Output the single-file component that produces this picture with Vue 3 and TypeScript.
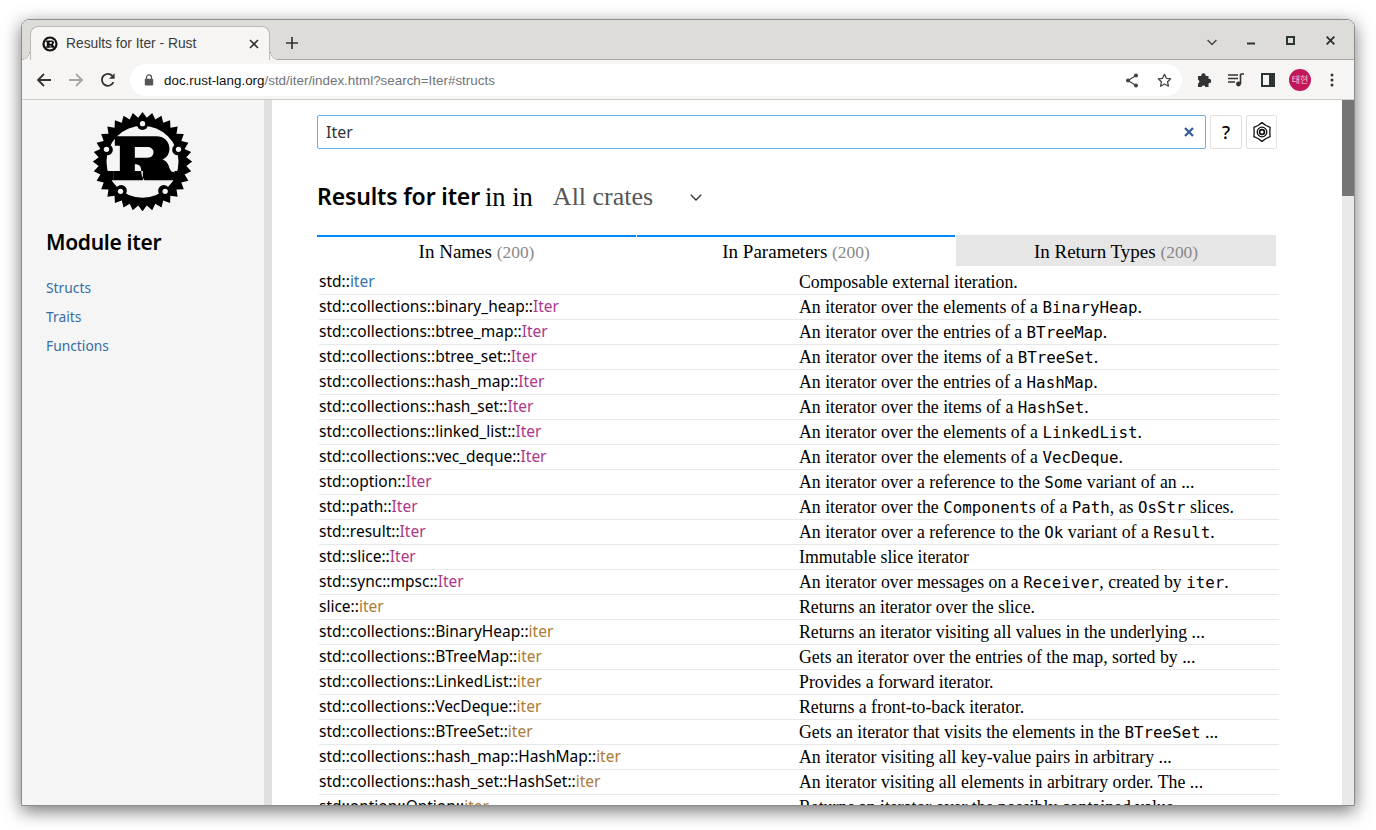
<template>
  <div class="desktop">
    <div class="window">
      <header class="tabstrip">
        <div class="tab">
          <svg class="favicon" width="16" height="16" viewBox="0 0 16 16">
            <circle cx="8" cy="8" r="7.6" fill="#111" />
            <circle cx="8" cy="8" r="5.4" fill="#f6f5f3" />
            <path d="M3.6 4.6h6.2c2.6 0 2.9 3.2 1 3.8 1 .3 1 2.4 2.2 2.2v1.1H9.6c-.8-.6-.4-2.5-2-2.5v1.2h1.2v1.3H3.6v-1.3h1.2V5.9H3.6zM7.6 6.1v1.7h1.7c1 0 1-1.7 0-1.7z" fill="#111" fill-rule="evenodd" />
          </svg>
          <span class="tab-title">Results for Iter - Rust</span>
          <svg class="tab-close" width="10" height="10" viewBox="0 0 10 10"><path d="M1 1l8 8M9 1l-8 8" stroke="#333" stroke-width="1.6" /></svg>
        </div>
        <svg class="new-tab" width="14" height="14" viewBox="0 0 14 14"><path d="M7 1v12M1 7h12" stroke="#333" stroke-width="1.7" /></svg>
        <div class="window-controls">
          <svg class="ctl-drop" width="10" height="7" viewBox="0 0 10 7"><path d="M.6 1l4.4 4.4L9.4 1" fill="none" stroke="#444" stroke-width="1.4" /></svg>
          <svg class="ctl-min" width="8" height="3" viewBox="0 0 8 3"><path d="M0 1.5h8" stroke="#2d3436" stroke-width="2" /></svg>
          <svg class="ctl-max" width="9" height="9" viewBox="0 0 9 9"><rect x="1" y="1" width="7" height="7" fill="none" stroke="#2d3436" stroke-width="2" /></svg>
          <svg class="ctl-close" width="9" height="9" viewBox="0 0 9 9"><path d="M.6.6l7.8 7.8M8.4.6L.6 8.4" stroke="#2d3436" stroke-width="1.9" /></svg>
        </div>
      </header>

      <div class="toolbar">
        <span class="slot"><svg width="16" height="16" viewBox="0 0 16 16"><path d="M15 8H2M8 2L2 8l6 6" fill="none" stroke="#333" stroke-width="1.8" /></svg></span>
        <span class="slot"><svg width="16" height="16" viewBox="0 0 16 16"><path d="M1 8h13M8 2l6 6-6 6" fill="none" stroke="#a5a5a5" stroke-width="1.8" /></svg></span>
        <span class="slot"><svg width="16" height="16" viewBox="0 0 16 16"><path d="M13.4 10.2A6 6 0 1 1 12.4 3.8" fill="none" stroke="#333" stroke-width="1.8" /><path d="M14.6 1.2v5.6H9z" fill="#333" /></svg></span>
        <div class="omnibox">
          <svg width="10" height="12" viewBox="0 0 10 12"><path d="M2.5 5V3.4a2.5 2.5 0 0 1 5 0V5" fill="none" stroke="#555" stroke-width="1.3" /><rect x=".8" y="4.8" width="8.4" height="6.8" rx="1" fill="#555" /></svg>
          <span class="url"><span class="url-host">doc.rust-lang.org</span>/std/iter/index.html?search=Iter#structs</span>
          <svg class="omni-share" width="14" height="15" viewBox="0 0 14 15"><path d="M11 2.5L3 7.5l8 5" fill="none" stroke="#444" stroke-width="1.2" /><circle cx="11" cy="2.5" r="2" fill="#444" /><circle cx="3" cy="7.5" r="2" fill="#444" /><circle cx="11" cy="12.5" r="2" fill="#444" /></svg>
          <svg class="omni-star" width="15" height="15" viewBox="0 0 15 15"><path d="M7.5 1.3l1.9 4 4.4.5-3.2 3 .8 4.4-3.9-2.2-3.9 2.2.8-4.4-3.2-3 4.4-.5z" fill="none" stroke="#444" stroke-width="1.3" stroke-linejoin="round" /></svg>
        </div>
        <div class="toolbar-right">
          <span class="slot"><svg width="15" height="15" viewBox="0 0 15 15"><path d="M4.3 3v-.5a2.2 2.2 0 0 1 4.4 0V3h2.8v2.8h.5a2.2 2.2 0 0 1 0 4.4h-.5V14H8.4a2 2 0 0 0-3.8 0H1v-3.5a2 2 0 0 0 0-3.8V3z" fill="#333" /></svg></span>
          <span class="slot"><svg width="16" height="14" viewBox="0 0 16 14"><path d="M0 2h10M0 5.5h10M0 9h7" stroke="#333" stroke-width="1.4" /><path d="M12.5 1v10" stroke="#333" stroke-width="1.6" /><path d="M12.5 1H16" stroke="#333" stroke-width="1.6" /><circle cx="10.5" cy="11" r="2.4" fill="#333" /></svg></span>
          <span class="slot"><svg width="14" height="14" viewBox="0 0 14 14"><rect x="1" y="1" width="12" height="12" fill="none" stroke="#2d3436" stroke-width="2" /><rect x="8" y="1" width="5" height="12" fill="#2d3436" /></svg></span>
          <span class="slot"><span class="avatar">태현</span></span>
          <span class="slot"><svg width="4" height="14" viewBox="0 0 4 14"><circle cx="2" cy="2" r="1.5" fill="#333" /><circle cx="2" cy="7" r="1.5" fill="#333" /><circle cx="2" cy="12" r="1.5" fill="#333" /></svg></span>
        </div>
      </div>

      <div class="page">
        <aside class="sidebar">
          <svg class="logo" width="99" height="99" viewBox="100 35 296 297">
            <path :d="gearPath" fill="#000" fill-rule="evenodd" />
            <!-- bumps that carry the five holes -->
            <circle cx="248" cy="72" r="17" fill="#000" />
            <circle cx="142" cy="148" r="17" fill="#000" />
            <circle cx="354" cy="148" r="17" fill="#000" />
            <circle cx="184" cy="271" r="17" fill="#000" />
            <circle cx="312" cy="271" r="17" fill="#000" />
            <path d="M165 108h125c44 0 52 56 18 70 14 4 18 14 22 28 3 8 8 10 14 8l4 26h-94c-6-6-10-16-10-30 0-14-8-18-19-18v20h24v28h-89v-28h20v-76h-15zM225 140v32h38c24 0 24-32 0-32z" fill="#000" fill-rule="evenodd" />
            <path d="M138 212h22v28h-10zM358 212h-14v28h4z" fill="#000" />
            <circle cx="248" cy="70" r="8" fill="#f5f5f5" />
            <circle cx="140" cy="147" r="8" fill="#f5f5f5" />
            <circle cx="356" cy="147" r="8" fill="#f5f5f5" />
            <circle cx="182" cy="273" r="8" fill="#f5f5f5" />
            <circle cx="316" cy="273" r="8" fill="#f5f5f5" />
          </svg>
          <h2 class="side-title">Module iter</h2>
          <nav class="side-links">
            <a v-for="link in sideLinks" :key="link">{{ link }}</a>
          </nav>
        </aside>
        <div class="resizer"></div>

        <main class="main">
          <div class="search-row">
            <div class="search-input">
              <span>Iter</span>
              <svg width="10" height="10" viewBox="0 0 10 10"><path d="M1 1l8 8M9 1l-8 8" stroke="#3a5d9c" stroke-width="2.4" /></svg>
            </div>
            <div class="icon-btn help">?</div>
            <div class="icon-btn gear">
              <svg width="22" height="22" viewBox="0 0 22 22" fill="none" stroke="#111">
                <path d="M11 1.6l4 2.9 4.1 1.8-.3 4.7.3 4.7-4.1 1.8-4 2.9-4-2.9-4.1-1.8.3-4.7-.3-4.7 4.1-1.8z" stroke-width="1.3" stroke-linejoin="round" />
                <circle cx="11" cy="11" r="4.8" stroke-width="1.3" />
                <circle cx="11" cy="11" r="2.4" stroke-width="1.7" />
              </svg>
            </div>
          </div>

          <div class="results-head">
            <h1>Results for iter</h1>
            <span class="in-in">in in</span>
            <span class="crate-select">All crates</span>
            <svg width="12" height="7" viewBox="0 0 12 7"><path d="M.8.8L6 6l5.2-5.2" fill="none" stroke="#333" stroke-width="1.3" /></svg>
          </div>

          <div class="tabs">
            <div v-for="t in tabs" :key="t" class="res-tab" :class="{ 'res-tab--off': t === 'In Return Types' }">
              {{ t }} <span class="count">(200)</span>
            </div>
          </div>

          <div class="rows">
            <div v-for="row in rows" :key="row.path + row.name" class="row">
              <div class="row-name">{{ row.path }}<span :class="`k-${row.kind}`">{{ row.name }}</span></div>
              <div class="row-desc">
                <template v-for="(part, i) in row.desc.split('`')" :key="i">
                  <code v-if="i % 2">{{ part }}</code>
                  <template v-else>{{ part }}</template>
                </template>
              </div>
            </div>
          </div>
        </main>

        <div class="scrollbar"><div class="thumb"></div></div>
      </div>
    </div>
  </div>
</template>

<script setup lang="ts">
interface ResultRow {
  path: string;
  name: string;
  kind: "mod" | "struct" | "method";
  desc: string;
}

const sideLinks = ["Structs", "Traits", "Functions"];
const tabs = ["In Names", "In Parameters", "In Return Types"];

const rows: ResultRow[] = [
  { path: "std::", name: "iter", kind: "mod", desc: "Composable external iteration." },
  { path: "std::collections::binary_heap::", name: "Iter", kind: "struct", desc: "An iterator over the elements of a `BinaryHeap`." },
  { path: "std::collections::btree_map::", name: "Iter", kind: "struct", desc: "An iterator over the entries of a `BTreeMap`." },
  { path: "std::collections::btree_set::", name: "Iter", kind: "struct", desc: "An iterator over the items of a `BTreeSet`." },
  { path: "std::collections::hash_map::", name: "Iter", kind: "struct", desc: "An iterator over the entries of a `HashMap`." },
  { path: "std::collections::hash_set::", name: "Iter", kind: "struct", desc: "An iterator over the items of a `HashSet`." },
  { path: "std::collections::linked_list::", name: "Iter", kind: "struct", desc: "An iterator over the elements of a `LinkedList`." },
  { path: "std::collections::vec_deque::", name: "Iter", kind: "struct", desc: "An iterator over the elements of a `VecDeque`." },
  { path: "std::option::", name: "Iter", kind: "struct", desc: "An iterator over a reference to the `Some` variant of an ..." },
  { path: "std::path::", name: "Iter", kind: "struct", desc: "An iterator over the `Component`s of a `Path`, as `OsStr` slices." },
  { path: "std::result::", name: "Iter", kind: "struct", desc: "An iterator over a reference to the `Ok` variant of a `Result`." },
  { path: "std::slice::", name: "Iter", kind: "struct", desc: "Immutable slice iterator" },
  { path: "std::sync::mpsc::", name: "Iter", kind: "struct", desc: "An iterator over messages on a `Receiver`, created by `iter`." },
  { path: "slice::", name: "iter", kind: "method", desc: "Returns an iterator over the slice." },
  { path: "std::collections::BinaryHeap::", name: "iter", kind: "method", desc: "Returns an iterator visiting all values in the underlying ..." },
  { path: "std::collections::BTreeMap::", name: "iter", kind: "method", desc: "Gets an iterator over the entries of the map, sorted by ..." },
  { path: "std::collections::LinkedList::", name: "iter", kind: "method", desc: "Provides a forward iterator." },
  { path: "std::collections::VecDeque::", name: "iter", kind: "method", desc: "Returns a front-to-back iterator." },
  { path: "std::collections::BTreeSet::", name: "iter", kind: "method", desc: "Gets an iterator that visits the elements in the `BTreeSet` ..." },
  { path: "std::collections::hash_map::HashMap::", name: "iter", kind: "method", desc: "An iterator visiting all key-value pairs in arbitrary ..." },
  { path: "std::collections::hash_set::HashSet::", name: "iter", kind: "method", desc: "An iterator visiting all elements in arbitrary order. The ..." },
  { path: "std::option::Option::", name: "iter", kind: "method", desc: "Returns an iterator over the possibly contained value." },
];

// toothed outer edge of the logo, with the inner opening cut out
function buildGear(cx: number, cy: number, outer: number, root: number, hole: number, teeth: number): string {
  const pts: string[] = [];
  for (let i = 0; i < teeth * 2; i++) {
    const r = i % 2 ? root : outer;
    const a = (i * Math.PI) / teeth - Math.PI / 2;
    pts.push(`${(cx + r * Math.cos(a)).toFixed(1)} ${(cy + r * Math.sin(a)).toFixed(1)}`);
  }
  const ring = `M${cx - hole} ${cy}a${hole} ${hole} 0 1 0 ${hole * 2} 0a${hole} ${hole} 0 1 0 ${-hole * 2} 0z`;
  return `M${pts.join("L")}z${ring}`;
}

const gearPath = buildGear(248, 184, 149, 132, 108, 32);
</script>

<style>
html {
  background: #fff;
  overflow: hidden;
}
</style>

<style scoped>
.desktop {
  box-sizing: border-box;
  width: 1376px;
  height: 830px;
  padding: 19px 0 0 21px;
  overflow: hidden;
}
.window {
  box-sizing: border-box;
  width: 1334px;
  height: 787px;
  border: 1px solid #8c8c8c;
  border-radius: 8px 8px 0 0;
  display: flex;
  flex-direction: column;
  overflow: hidden;
  box-shadow: 0 5px 18px rgba(0, 0, 0, 0.55);
  font-family: "Liberation Sans", sans-serif;
}
.tabstrip {
  height: 40px;
  flex: none;
  background: #dedcd9;
  box-shadow: inset 0 -1px 0 #a9a7a3;
  display: flex;
  align-items: flex-end;
  padding-left: 8px;
  box-sizing: border-box;
}
.tab {
  position: relative;
  width: 240px;
  height: 34px;
  background: #f6f5f3;
  border: 1px solid #bdbab5;
  border-bottom: 0;
  border-radius: 8px 8px 0 0;
  box-sizing: border-box;
  display: flex;
  align-items: center;
  padding: 0 10px 0 11px;
  gap: 8px;
}
.tab::before,
.tab::after {
  content: "";
  position: absolute;
  bottom: 0;
  width: 8px;
  height: 8px;
}
.tab::before {
  left: -9px;
  background: radial-gradient(circle at 0 0, transparent 7px, #a9a7a3 7.5px, #f6f5f3 8px);
}
.tab::after {
  right: -9px;
  background: radial-gradient(circle at 100% 0, transparent 7px, #a9a7a3 7.5px, #f6f5f3 8px);
}
.tab-title {
  font-size: 13.8px;
  color: #3c3c3c;
  flex: 1;
}
.new-tab {
  margin: 0 0 10px 15px;
}
.window-controls {
  margin: 0 0 0 auto;
  height: 40px;
  display: flex;
  align-items: center;
  padding-right: 19px;
}
.ctl-drop { margin-top: 5px; }
.ctl-min { margin: 6px 0 0 30px; }
.ctl-max { margin-left: 31px; }
.ctl-close { margin-left: 31px; }
.toolbar {
  height: 40px;
  flex: none;
  box-sizing: border-box;
  background: #f6f5f3;
  border-bottom: 1px solid #cfccc6;
  display: flex;
  align-items: center;
  padding: 1px 0 0 6px;
}
.slot {
  width: 32px;
  height: 32px;
  flex: none;
  display: flex;
  align-items: center;
  justify-content: center;
}
.omnibox {
  width: 1052px;
  height: 32px;
  background: #fff;
  border-radius: 16px;
  margin-left: 6px;
  display: flex;
  align-items: center;
  padding: 0 10px 0 14px;
  box-sizing: border-box;
}
.url {
  margin-left: 10px;
  font-size: 13.4px;
  color: #6f7478;
  flex: 1;
}
.url-host { color: #111; }
.omni-share { margin-right: 18px; }
.toolbar-right {
  display: flex;
  align-items: center;
  margin-left: 6px;
}
.avatar {
  width: 22px;
  height: 22px;
  border-radius: 50%;
  background: #c2185b;
  color: #f7c3d6;
  font: 9px/22px "Noto Sans CJK KR", sans-serif;
  text-align: center;
}
.page {
  flex: 1;
  min-height: 0;
  display: flex;
  background: #fff;
}
.sidebar {
  width: 242px;
  flex: none;
  background: #f5f5f5;
  display: flex;
  flex-direction: column;
  box-sizing: border-box;
  padding: 12px 24px 0;
}
.logo {
  margin-left: 47px;
  display: block;
}
.side-title {
  margin: 18px 0 0;
  font: 600 21px/26px "Noto Sans", sans-serif;
  letter-spacing: -0.3px;
  color: #000;
}
.side-links {
  margin-top: 22px;
  display: flex;
  flex-direction: column;
  gap: 8px;
}
.side-links a {
  font: 13.8px/21px "Noto Sans", sans-serif;
  color: #356da4;
}
.resizer {
  width: 8px;
  flex: none;
  background: #e0e0e0;
}
.main {
  flex: 1;
  min-width: 0;
  overflow: hidden;
  padding: 15px 0 0 45px;
}
.search-row {
  display: flex;
  gap: 4px;
  width: 960px;
}
.search-input {
  width: 889px;
  height: 34px;
  box-sizing: border-box;
  border: 1px solid #66afe9;
  border-radius: 2px;
  display: flex;
  align-items: center;
  justify-content: space-between;
  padding: 0 11px 0 8px;
  font: 16px "Noto Sans", sans-serif;
  color: #333;
}
.icon-btn {
  height: 34px;
  width: 32px;
  box-sizing: border-box;
  border: 1px solid #e0e0e0;
  border-radius: 2px;
  display: flex;
  align-items: center;
  justify-content: center;
}
.gear { width: 31px; }
.help {
  font: 500 18px "Noto Sans", sans-serif;
  color: #000;
}
.results-head {
  display: flex;
  align-items: center;
  margin-top: 30px;
  height: 36px;
}
.results-head h1 {
  margin: -2px 0 0;
  font: 600 23px/36px "Noto Sans", sans-serif;
  letter-spacing: -0.15px;
  color: #000;
}
.in-in {
  font: 26.5px/36px "Liberation Serif", serif;
  color: #000;
  margin-left: 5px;
}
.crate-select {
  font: 26px/36px "Liberation Serif", serif;
  color: #555;
  margin-left: 20px;
  width: 137px;
}
.tabs {
  display: grid;
  grid-template-columns: 319px 318px 320px;
  gap: 1px;
  margin-top: 20px;
}
.res-tab {
  height: 31px;
  box-sizing: border-box;
  border-top: 2px solid #0089ff;
  text-align: center;
  font: 19px/29px "Liberation Serif", serif;
  color: #000;
}
.res-tab--off {
  border-top-color: #e6e6e6;
  background: #e6e6e6;
}
.count {
  color: #888;
  font-size: 17.4px;
}
.rows {
  width: 960px;
  margin: 4px 0 0 2px;
}
.row {
  display: grid;
  grid-template-columns: 480px 1fr;
  height: 25px;
  box-sizing: border-box;
  border-bottom: 1px solid #e8e8e8;
  white-space: nowrap;
}
.row-name {
  font: 15.5px/22px "Noto Sans", sans-serif;
  color: #000;
}
.row-desc {
  font: 17.8px/25px "Liberation Serif", serif;
  color: #000;
}
.row-desc code {
  font: 15.8px/24px "DejaVu Sans Mono", monospace;
}
.k-mod { color: #3873ad; }
.k-struct { color: #ad378a; }
.k-method { color: #ad7c37; }
.scrollbar {
  width: 12px;
  flex: none;
  background: #e9e9e9;
}
.thumb {
  height: 96px;
  background: #757575;
}
</style>
